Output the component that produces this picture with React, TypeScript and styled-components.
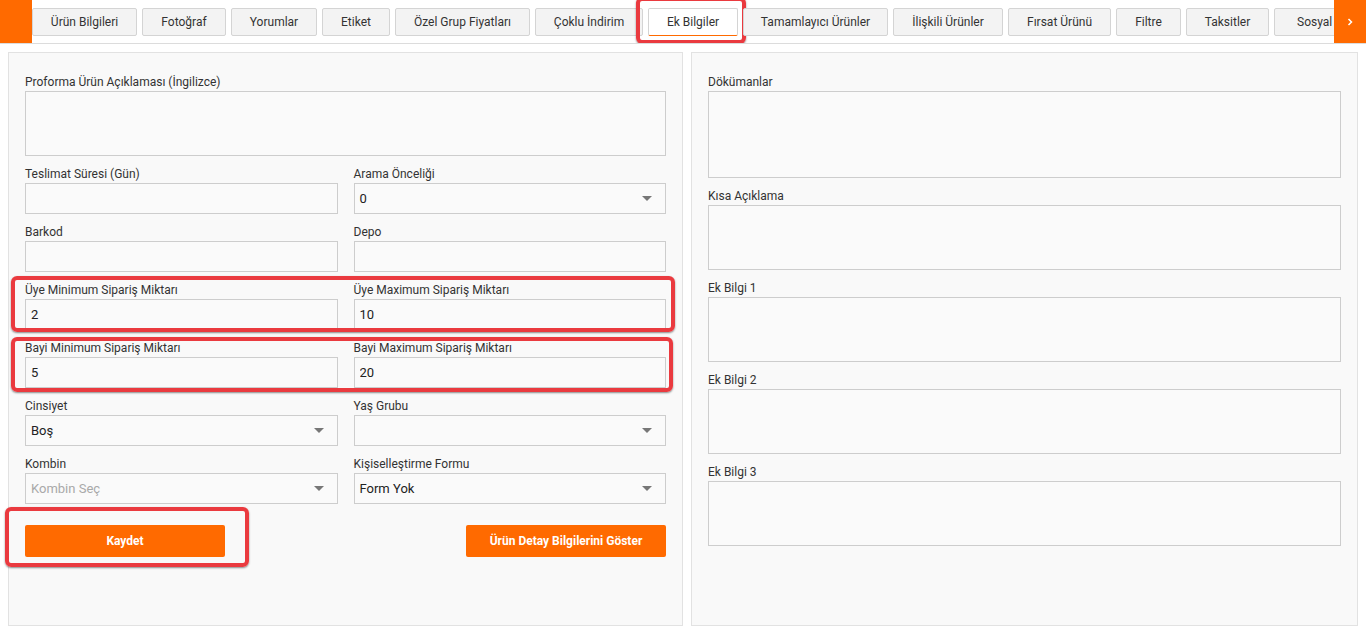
import React from 'react';
import styled, { createGlobalStyle } from 'styled-components';

const ORANGE = '#ff6a00';
const MARK = '#ea3a3f';

const GlobalStyle = createGlobalStyle`
  html, body { margin: 0; padding: 0; background: #fff; }
  body { font-family: Roboto, 'Liberation Sans', Arial, sans-serif; color: #333; }
  * { box-sizing: border-box; }
`;

const Page = styled.div`
  display: flex;
  flex-direction: column;
  height: 100vh;
  min-height: 635px;
`;

const TabBar = styled.div`
  display: flex;
  height: 44px;
  flex-shrink: 0;
  background: #fff;
  border-bottom: 1px solid #dcdcdc;
`;

const Cap = styled.div`
  width: 32px;
  flex-shrink: 0;
  background: ${ORANGE};
  display: flex;
  align-items: center;
  justify-content: center;
`;

const TabStrip = styled.div`
  flex: 1;
  display: flex;
  align-items: flex-start;
  gap: 5px;
  padding-top: 8px;
  overflow: hidden;
`;

const Tab = styled.div<{ $w: number; $active?: boolean }>`
  position: relative;
  flex-shrink: 0;
  width: ${({ $w }) => $w}px;
  height: 28px;
  display: flex;
  align-items: center;
  justify-content: center;
  white-space: nowrap;
  font-size: 12px;
  color: #333;
  background: ${({ $active }) => ($active ? '#fff' : '#f3f3f3')};
  border: 1px solid #d4d4d4;
  border-bottom-color: ${({ $active }) => ($active ? ORANGE : '#d4d4d4')};
  border-radius: 2px;

  ${({ $active }) =>
    $active &&
    `
    &::after {
      content: '';
      position: absolute;
      top: -12px; left: -13px; right: -9px; bottom: -9px;
      border: 4px solid ${MARK};
      border-radius: 6px;
      box-shadow: 0 1px 2px rgba(0,0,0,.45);
      pointer-events: none;
    }
  `}
`;

const Body = styled.div`
  flex: 1;
  min-height: 0;
  display: grid;
  grid-template-columns: 675px 667px;
  gap: 8px;
  padding: 8px 8px 9px 8px;
`;

const Panel = styled.div`
  background: #f9f9f9;
  border: 1px solid #e2e2e2;
  padding: 21px 16px 16px;
  display: flex;
  flex-direction: column;
  gap: 10px;
`;

const markBox = (inset: string) => `
  &::after {
    content: '';
    position: absolute;
    inset: ${inset};
    border: 4px solid ${MARK};
    border-radius: 6px;
    box-shadow: 0 1px 2px rgba(0,0,0,.45);
    pointer-events: none;
  }
`;

const Row = styled.div<{ $mark?: string }>`
  position: relative;
  display: grid;
  grid-template-columns: 1fr 1fr;
  column-gap: 16px;
  ${({ $mark }) => ($mark ? markBox($mark) : '')}
`;

const Field = styled.div<{ $span?: boolean }>`
  display: flex;
  flex-direction: column;
  grid-column: ${({ $span }) => ($span ? '1 / -1' : 'auto')};
`;

const Label = styled.label`
  font-size: 12px;
  line-height: 16px;
  margin-bottom: 1px;
  color: #333;
  white-space: nowrap;
`;

const Input = styled.input`
  height: 31px;
  width: 100%;
  padding: 0 5px;
  border: 1px solid #cdcdcd;
  background: #fafafa;
  font: 13px Roboto, 'Liberation Sans', Arial, sans-serif;
  color: #222;
  outline: none;
`;

const TextArea = styled.textarea<{ $h: number }>`
  height: ${({ $h }) => $h}px;
  width: 100%;
  resize: none;
  border: 1px solid #cdcdcd;
  background: #fafafa;
  outline: none;
  display: block;
`;

const SelectBox = styled.div<{ $placeholder?: boolean }>`
  height: 31px;
  display: flex;
  align-items: center;
  justify-content: space-between;
  padding: 0 13px 0 5px;
  border: 1px solid #cdcdcd;
  background: #fafafa;
  font-size: 13px;
  color: ${({ $placeholder }) => ($placeholder ? '#a9a9a9' : '#222')};
`;

const Caret = styled.span`
  width: 0;
  height: 0;
  border-left: 5px solid transparent;
  border-right: 5px solid transparent;
  border-top: 5px solid #777;
`;

const Actions = styled.div`
  display: flex;
  justify-content: space-between;
  margin-top: 11px;
`;

const ButtonWrap = styled.div<{ $mark?: string }>`
  position: relative;
  ${({ $mark }) => ($mark ? markBox($mark) : '')}
`;

const Button = styled.button`
  width: 200px;
  height: 32px;
  border: none;
  border-radius: 2px;
  background: ${ORANGE};
  color: #fff;
  font: bold 12px Roboto, 'Liberation Sans', Arial, sans-serif;
  cursor: pointer;
`;

const tabs = [
  { label: 'Ürün Bilgileri', w: 105 },
  { label: 'Fotoğraf', w: 84 },
  { label: 'Yorumlar', w: 86 },
  { label: 'Etiket', w: 68 },
  { label: 'Özel Grup Fiyatları', w: 135 },
  { label: 'Çoklu İndirim', w: 108 },
  { label: 'Ek Bilgiler', w: 90, active: true },
  { label: 'Tamamlayıcı Ürünler', w: 145 },
  { label: 'İlişkili Ürünler', w: 110 },
  { label: 'Fırsat Ürünü', w: 103 },
  { label: 'Filtre', w: 65 },
  { label: 'Taksitler', w: 83 },
  { label: 'Sosyal Medya', w: 120 },
];

const rightAreas = [
  { label: 'Dökümanlar', h: 87 },
  { label: 'Kısa Açıklama', h: 65 },
  { label: 'Ek Bilgi 1', h: 65 },
  { label: 'Ek Bilgi 2', h: 65 },
  { label: 'Ek Bilgi 3', h: 65 },
];

function Select({ value, placeholder }: { value?: string; placeholder?: string }) {
  return (
    <SelectBox $placeholder={!value && !!placeholder}>
      <span>{value || placeholder || ''}</span>
      <Caret />
    </SelectBox>
  );
}

export default function App() {
  return (
    <Page>
      <GlobalStyle />
      <TabBar>
        <Cap />
        <TabStrip>
          {tabs.map((t) => (
            <Tab key={t.label} $w={t.w} $active={t.active}>
              {t.label}
            </Tab>
          ))}
        </TabStrip>
        <Cap>
          <svg width="6" height="8" viewBox="0 0 6 8">
            <polyline points="1.5,1 4.5,4 1.5,7" fill="none" stroke="#fff" strokeWidth="1.5" />
          </svg>
        </Cap>
      </TabBar>

      <Body>
        <Panel>
          <Row>
            <Field $span>
              <Label>Proforma Ürün Açıklaması (İngilizce)</Label>
              <TextArea $h={65} />
            </Field>
          </Row>
          <Row>
            <Field>
              <Label>Teslimat Süresi (Gün)</Label>
              <Input />
            </Field>
            <Field>
              <Label>Arama Önceliği</Label>
              <Select value="0" />
            </Field>
          </Row>
          <Row>
            <Field>
              <Label>Barkod</Label>
              <Input />
            </Field>
            <Field>
              <Label>Depo</Label>
              <Input />
            </Field>
          </Row>
          <Row $mark="-6px -9px -2px -14px">
            <Field>
              <Label>Üye Minimum Sipariş Miktarı</Label>
              <Input defaultValue="2" />
            </Field>
            <Field>
              <Label>Üye Maximum Sipariş Miktarı</Label>
              <Input defaultValue="10" />
            </Field>
          </Row>
          <Row $mark="-3px -7px -4px -14px">
            <Field>
              <Label>Bayi Minimum Sipariş Miktarı</Label>
              <Input defaultValue="5" />
            </Field>
            <Field>
              <Label>Bayi Maximum Sipariş Miktarı</Label>
              <Input defaultValue="20" />
            </Field>
          </Row>
          <Row>
            <Field>
              <Label>Cinsiyet</Label>
              <Select value="Boş" />
            </Field>
            <Field>
              <Label>Yaş Grubu</Label>
              <Select />
            </Field>
          </Row>
          <Row>
            <Field>
              <Label>Kombin</Label>
              <Select placeholder="Kombin Seç" />
            </Field>
            <Field>
              <Label>Kişiselleştirme Formu</Label>
              <Select value="Form Yok" />
            </Field>
          </Row>
          <Actions>
            <ButtonWrap $mark="-18px -24px -10px -20px">
              <Button>Kaydet</Button>
            </ButtonWrap>
            <ButtonWrap>
              <Button>Ürün Detay Bilgilerini Göster</Button>
            </ButtonWrap>
          </Actions>
        </Panel>

        <Panel>
          {rightAreas.map((a) => (
            <Field key={a.label}>
              <Label>{a.label}</Label>
              <TextArea $h={a.h} />
            </Field>
          ))}
        </Panel>
      </Body>
    </Page>
  );
}
